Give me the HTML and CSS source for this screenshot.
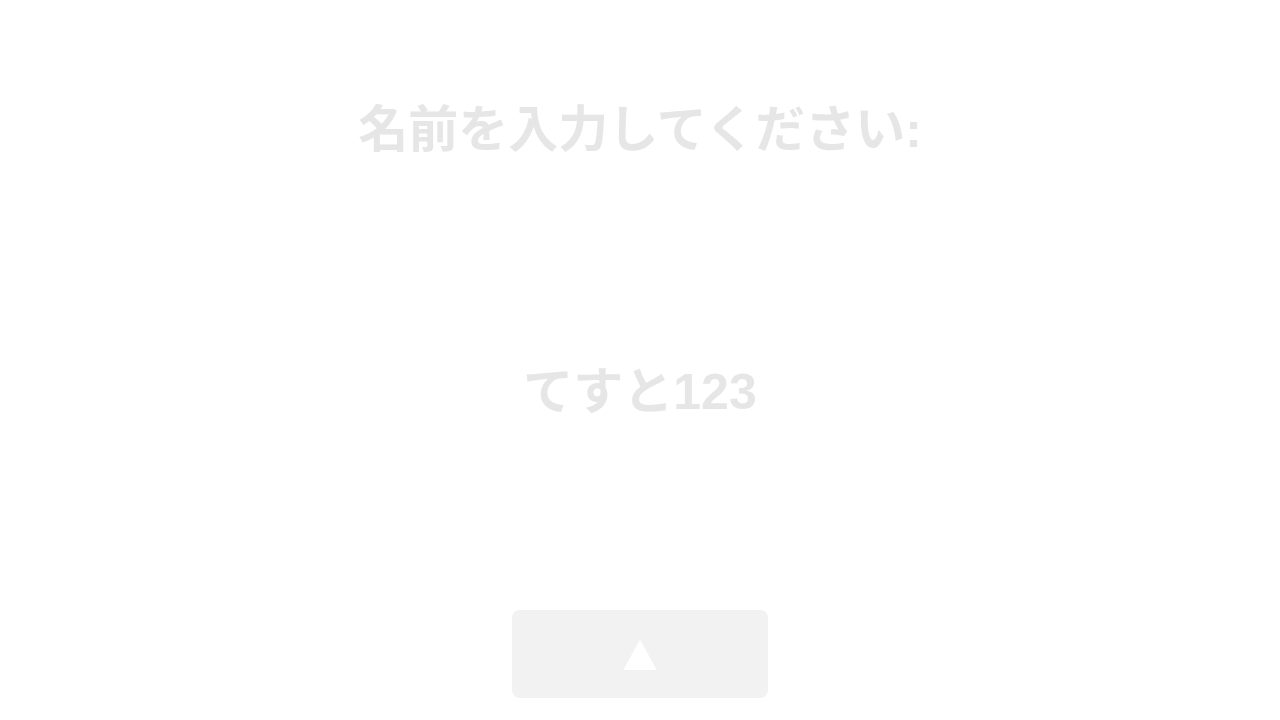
FILE: index.html
```html
<!DOCTYPE html>
<html lang="ja">
<head>
<meta charset="utf-8">
<link rel="stylesheet" href="styles.css">
</head>
<body>
<main class="screen">
  <h1 class="prompt">名前を入力してください:</h1>
  <div class="value">てすと123</div>
  <button class="btn" type="button">
    <svg class="tri" width="36" height="32" viewBox="0 0 36 32" aria-hidden="true">
      <path d="M18 2.5 L33 30 L3 30 Z" fill="#ffffff" stroke="#ffffff" stroke-width="2" stroke-linejoin="round"/>
    </svg>
  </button>
</main>
</body>
</html>
```
FILE: styles.css
```css
html, body {
  margin: 0;
  padding: 0;
  background: #ffffff;
}
.screen {
  width: 1280px;
  height: 720px;
  display: flex;
  flex-direction: column;
  align-items: center;
  font-family: "Liberation Sans", "Noto Sans CJK JP", sans-serif;
  color: #e6e6e6;
}
.prompt {
  margin: 0;
  padding-top: 100px;
  font-size: 50px;
  line-height: 60px;
  font-weight: 700;
}
.value {
  margin-top: 202px;
  font-size: 50px;
  line-height: 60px;
  font-weight: 700;
}
.btn {
  margin-top: 188px;
  width: 256px;
  height: 88px;
  border: none;
  border-radius: 8px;
  background: #f2f2f2;
  display: flex;
  align-items: center;
  justify-content: center;
  padding: 0;
}
.tri {
  margin-top: 2px;
}
```
